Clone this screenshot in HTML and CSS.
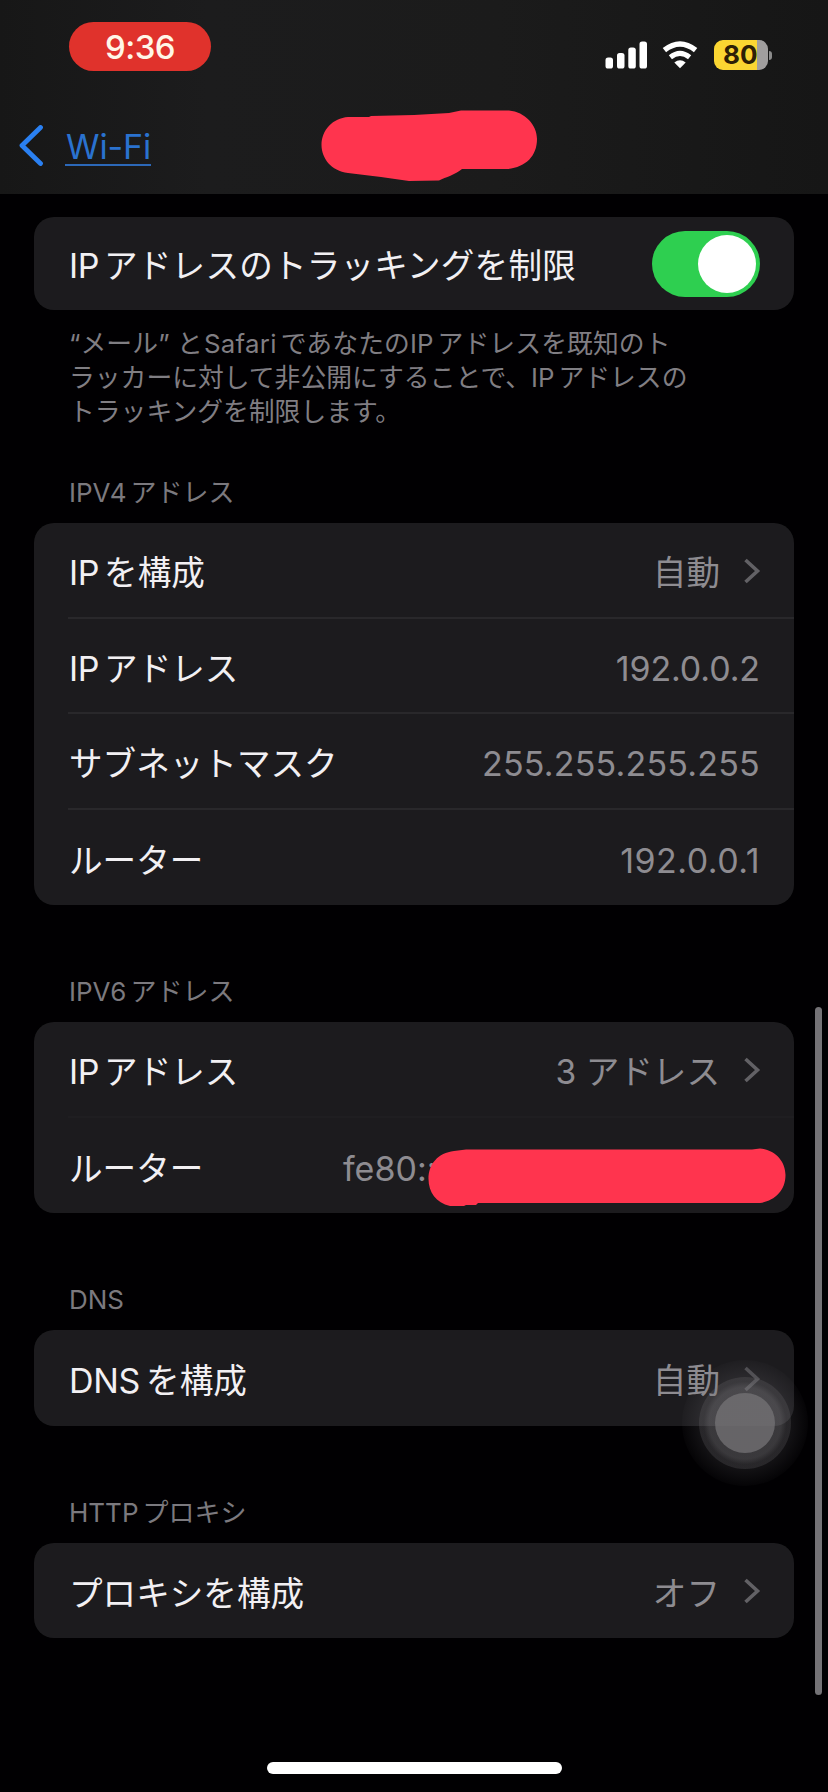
FILE: index.html
```html
<!DOCTYPE html>
<html lang="ja">
<head>
<meta charset="utf-8">
<title>Wi-Fi</title>
<link rel="stylesheet" href="styles.css">
</head>
<body>
<div class="screen">
  <header class="top">
    <div class="status">
      <div class="clock">9:36</div>
      <div class="indicators">
        <svg class="signal" width="43" height="28" viewBox="0 0 43 28" fill="#fff">
          <rect x="0.5" y="16.5" width="7.5" height="11" rx="2.6"/>
          <rect x="12" y="12" width="7.5" height="15.500" rx="2.600"/>
          <rect x="23.300" y="6.500" width="7.500" height="21" rx="2.600"/>
          <rect x="34.500" y="0.500" width="7.500" height="27" rx="2.600"/>
        </svg>
        <svg class="wifi" width="36" height="28" viewBox="0 0 36 28">
          <path d="M2.400 9.200Q18 -3.200 33.600 9.200" fill="none" stroke="#fff" stroke-width="5.400"/>
          <path d="M8.400 16.200Q18 8.400 27.600 16.200" fill="none" stroke="#fff" stroke-width="5"/>
          <path d="M12.300 21.400Q18 17 23.700 21.400L18 27.200Z" fill="#fff"/>
        </svg>
        <div class="battery"><span class="level">80</span></div>
        <div class="knob"></div>
      </div>
    </div>
    <nav class="nav">
      <svg width="25" height="42" viewBox="0 0 25 42"><path d="M21.500 2.500L3 20.500L21.500 38.500" fill="none" stroke="#2a80f2" stroke-width="4.800" stroke-linecap="round" stroke-linejoin="round"/></svg>
      <a class="back">Wi-Fi</a>
      <svg class="title-mark" width="217" height="72" viewBox="0 0 217 72"><path d="M27 7L48 7L50 6L93 5L128 3L140 .5H188C204 2 216 15 216 29C216 46 205 57 187 59H141C134 65 125 67 118 70.500L88 71L60 67L27 63C10 61 .5 48 .5 35C.5 20 12 8 27 7Z" fill="#ff344e"/></svg>
    </nav>
  </header>

  <main class="content">
    <section class="card first">
      <div class="row"><span class="label"><i class="ip">IP</i>アドレスのトラッキングを制限</span><span class="switch"><span class="thumb"></span></span></div>
    </section>
    <p class="note"><span class="line1">“メール” と<i class="safari">Safari</i>であなたの<i>IP</i>アドレスを既知のト</span><br>ラッカーに対して非公開にすることで、<i>IP</i>アドレスの<br>トラッキングを制限します。</p>

    <h2 class="head v4"><i>IPV4</i>アドレス</h2>
    <section class="card">
      <div class="row"><span class="label"><i class="ip">IP</i>を構成</span><span class="value">自動</span><svg class="chev" width="18" height="28" viewBox="0 0 18 28"><path d="M2.500 3L14.500 14L2.500 25"/></svg></div>
      <div class="row"><span class="label"><i class="ip">IP</i>アドレス</span><span class="value num">192.0.0.2</span></div>
      <div class="row"><span class="label">サブネットマスク</span><span class="value num mask">255.255.255.255</span></div>
      <div class="row"><span class="label">ルーター</span><span class="value num router">192.0.0.1</span></div>
    </section>

    <h2 class="head"><i>IPV6</i>アドレス</h2>
    <section class="card faint">
      <div class="row"><span class="label"><i class="ip">IP</i>アドレス</span><span class="value">3 アドレス</span><svg class="chev" width="18" height="28" viewBox="0 0 18 28"><path d="M2.500 3L14.500 14L2.500 25"/></svg></div>
      <div class="row"><span class="label">ルーター</span><span class="value fe">fe80::</span><svg class="mark" width="358" height="59" viewBox="0 0 358 59"><path d="M26 3L38 1.500H324L332 .5C348 2 357.500 14 357.500 27C357.500 43 346 53 332 55H50L48 57H38L36 58H22C8 55 .5 44 .5 31C.5 16 10 5 26 3Z" fill="#ff344e"/></svg></div>
    </section>

    <h2 class="head"><i>DNS</i></h2>
    <section class="card">
      <div class="row"><span class="label"><i class="dn">DNS</i>を構成</span><span class="value">自動</span><svg class="chev dim" width="18" height="28" viewBox="0 0 18 28"><path d="M2.500 3L14.500 14L2.500 25"/></svg></div>
    </section>

    <h2 class="head"><i>HTTP</i>プロキシ</h2>
    <section class="card">
      <div class="row"><span class="label">プロキシを構成</span><span class="value">オフ</span><svg class="chev" width="18" height="28" viewBox="0 0 18 28"><path d="M2.500 3L14.500 14L2.500 25"/></svg></div>
    </section>
  </main>

  <div class="scrollbar"></div>
  <div class="touch"><div class="ring"><div class="dot"></div></div></div>
  <div class="home"></div>
</div>
</body>
</html>
```
FILE: styles.css
```css
* { box-sizing: border-box; }
body { margin: 0; background: #010002; }
i { font-style: normal; }
.screen {
  position: relative;
  width: 828px;
  height: 1792px;
  overflow: hidden;
  background: #010002;
  color: #f2f0f3;
  font: 400 34px/40px Inter, "Noto Sans CJK JP", sans-serif;
  font-feature-settings: "calt" 0;
}
.top {
  height: 194px;
  background: linear-gradient(90deg, #171717, #1c1c1d 25%, #1b1b1b 60%, #161616);
}
.status { display: flex; justify-content: space-between; height: 100px; padding: 22px 56px 0 69px; }
.clock {
  width: 142px;
  height: 49px;
  border-radius: 25px;
  background: #e0322c;
  color: #fff6e8;
  font-size: 33px;
  font-weight: 500;
  line-height: 51px;
  text-align: center;
  letter-spacing: -0.6px;
}
.indicators { display: flex; align-items: flex-start; padding-top: 18px; }
.signal { margin: 1px 14px 0 0; }
.wifi { margin: 1px 16px 0 0; }
.battery {
  width: 54px;
  height: 30px;
  border-radius: 9px;
  background: linear-gradient(90deg, #fbd632 43px, #a09e9e 43px);
  color: #2d2006;
  font-size: 26px;
  font-weight: 700;
  line-height: 30px;
}
.level { padding-left: 9px; }
.knob { width: 3px; height: 9px; margin: 11px 0 0 1px; border-radius: 0 3px 3px 0; background: #8b8b8b; }
.nav { display: flex; align-items: flex-start; padding-left: 19px; }
.nav svg { flex: none; margin-top: 25px; }
.back {
  height: 41px;
  margin: 25px 0 0 21px;
  width: 86px;
  padding-left: 1px;
  border-bottom: 2px solid #2c68b8;
  color: #2a72cf;
  line-height: 43px;
  letter-spacing: -0.1px;
  white-space: nowrap;
}
.nav .title-mark { margin: 10px 0 0 170px; }
.content { padding: 23px 34px 0; }
.card { border-radius: 20px; background: #1c1b1e; overflow: hidden; }
.row {
  position: relative;
  display: flex;
  align-items: center;
  height: 95.5px;
  margin-left: 34px;
  padding: 0 34px 0 0;
}
.first .row { height: 93px; }
.row:not(:last-child) { border-bottom: 2px solid #29282b; }
.faint .row:not(:last-child) { border-bottom-color: #1f1e21; }
.label { flex: 1; padding: 7px 0 0 1px; font-size: 33.6px; white-space: nowrap; }
.first .label { padding-top: 4px; letter-spacing: 0.2px; }
.label i { font-size: 34px; }
.ip { margin-right: 5px; letter-spacing: -0.4px; }
.dn { margin-right: 6px; letter-spacing: -0.3px; }
.value { padding-top: 7px; color: #8e8c91; font-size: 33.6px; white-space: nowrap; }
.num { font-size: 34px; letter-spacing: -0.1px; }
.mask { letter-spacing: 0.2px; }
.router { letter-spacing: 0.5px; }
.chev { margin: 2px -1px 0 23px; fill: none; stroke: #626165; stroke-width: 3.6; }
.dim { stroke: #4c4b4f; }
.switch { width: 108px; height: 66px; padding: 4px; border-radius: 33px; background: #2ecf50; display: flex; justify-content: flex-end; }
.thumb { width: 58px; height: 58px; border-radius: 50%; background: #fff; }
.fe { width: 417px; font-size: 34px; }
.mark { position: absolute; right: 8px; top: 30px; }
.note { height: 103px; margin: 17px 0 0 35px; color: #807e83; font-size: 25.8px; line-height: 34px; white-space: nowrap; }
.note i { margin-right: 4px; }
.line1 { letter-spacing: 0.1px; }
.note .safari { margin-left: 1px; letter-spacing: 0.3px; }
.head { height: 117px; margin: 0; padding: 70px 0 0 35px; color: #7b797e; font-size: 26px; font-weight: 400; line-height: 34px; }
.head i { margin-right: 4px; letter-spacing: 0; }
.v4 { padding-top: 46px; height: 93px; }
.scrollbar { position: absolute; left: 815px; top: 1007px; width: 7px; height: 688px; border-radius: 4px; background: #747276; }
.touch { position: absolute; left: 682px; top: 1360px; width: 126px; height: 126px; padding: 17px; border-radius: 50%; background: radial-gradient(circle closest-side, rgba(120, 118, 124, 0.14) 75%, rgba(120, 118, 124, 0.03)); }
.ring { width: 92px; height: 92px; padding: 16px; border-radius: 50%; background: radial-gradient(circle closest-side, rgba(140, 138, 142, 0.33) 78%, rgba(120, 118, 122, 0.22) 90%); }
.dot { width: 60px; height: 60px; border-radius: 50%; background: rgba(118, 116, 119, 0.74); }
.home { position: absolute; left: 267px; top: 1762px; width: 295px; height: 12px; border-radius: 6px; background: #fff; }
```
